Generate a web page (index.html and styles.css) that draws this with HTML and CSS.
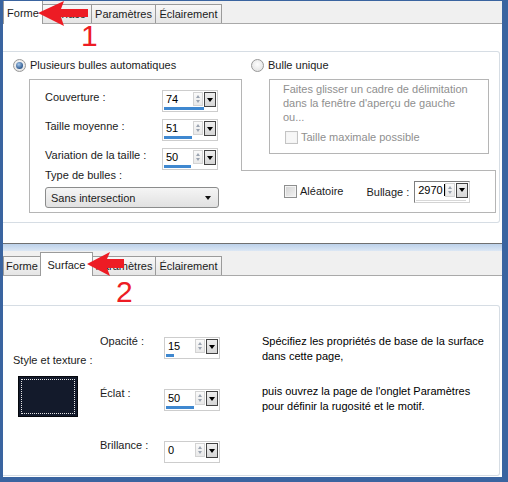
FILE: index.html
```html
<!DOCTYPE html>
<html lang="fr">
<head>
  <meta charset="UTF-8" />
  <meta name="viewport" content="width=device-width, initial-scale=1.0"/>
  <title>Bulles - Forme et Surface</title>
  <link rel="stylesheet" href="styles.css">
</head>
<body>

  <div class="frame">

    <!-- Onglet Forme -->
    <section class="panel panel-forme">
      <div class="tabs">
        <div class="tab tab-forme active">Forme</div>
        <div class="tab tab-surface">Surface</div>
        <div class="tab tab-params">Paramètres</div>
        <div class="tab tab-light">Éclairement</div>
      </div>

      <div class="page page-forme">
        <div class="group group-forme">
          <div class="radio-row">
            <label class="option option-auto"><span class="radio checked"></span>Plusieurs bulles automatiques</label>
            <label class="option"><span class="radio"></span>Bulle unique</label>
          </div>

          <div class="bubble-grid">
            <div class="auto-box">
              <div class="fields">
                <div class="field">
                  <span class="field-label">Couverture :</span>
                  <div class="spin">
                    <div class="spin-main"><span class="spin-value">74</span><span class="spin-arrows"></span><span class="spin-drop"></span></div>
                    <div class="spin-bar" style="width: 40px"></div>
                  </div>
                </div>
                <div class="field">
                  <span class="field-label">Taille moyenne :</span>
                  <div class="spin">
                    <div class="spin-main"><span class="spin-value">51</span><span class="spin-arrows"></span><span class="spin-drop"></span></div>
                    <div class="spin-bar" style="width: 28px"></div>
                  </div>
                </div>
                <div class="field">
                  <span class="field-label">Variation de la taille :</span>
                  <div class="spin">
                    <div class="spin-main"><span class="spin-value">50</span><span class="spin-arrows"></span><span class="spin-drop"></span></div>
                    <div class="spin-bar" style="width: 27px"></div>
                  </div>
                </div>
              </div>
              <div class="type-label">Type de bulles :</div>
              <div class="select">Sans intersection</div>
            </div>

            <div class="single-box">
              <p class="hint">Faites glisser un cadre de délimitation<br>dans la fenêtre d'aperçu de gauche<br>ou...</p>
              <label class="check-row check-disabled"><span class="checkbox"></span>Taille maximale possible</label>
            </div>

            <div class="random-box">
              <label class="check-row"><span class="checkbox"></span>Aléatoire</label>
              <span class="bullage-label">Bullage :</span>
              <div class="spin spin-focus">
                <div class="spin-main"><span class="spin-value"><span class="caret">2970</span></span><span class="spin-arrows"></span><span class="spin-drop"></span></div>
                <div class="spin-bar spin-bar-empty"></div>
              </div>
            </div>
          </div>
        </div>
      </div>

      <svg class="arrow arrow-1" width="52" height="27" viewBox="0 0 52 27">
        <polygon points="0,12 26,0 23,8 50,8 50,16 23,16 26,25" />
      </svg>
      <span class="step step-1">1</span>
    </section>

    <div class="divider"></div>

    <!-- Onglet Surface -->
    <section class="panel panel-surface">
      <div class="tabs">
        <div class="tab tab-forme">Forme</div>
        <div class="tab tab-surface active">Surface</div>
        <div class="tab tab-params">Paramètres</div>
        <div class="tab tab-light">Éclairement</div>
      </div>

      <div class="page page-surface">
        <div class="group group-surface">
          <div class="style-col">
            <div class="style-label">Style et texture :</div>
            <div class="swatch"></div>
          </div>

          <div class="surface-fields">
            <div class="surface-field">
              <span class="field-label">Opacité :</span>
              <div class="spin">
                <div class="spin-main"><span class="spin-value">15</span><span class="spin-arrows"></span><span class="spin-drop"></span></div>
                <div class="spin-bar" style="width: 8px"></div>
              </div>
            </div>
            <div class="surface-field">
              <span class="field-label">Éclat :</span>
              <div class="spin">
                <div class="spin-main"><span class="spin-value">50</span><span class="spin-arrows"></span><span class="spin-drop"></span></div>
                <div class="spin-bar" style="width: 28px"></div>
              </div>
            </div>
            <div class="surface-field">
              <span class="field-label">Brillance :</span>
              <div class="spin">
                <div class="spin-main"><span class="spin-value">0</span><span class="spin-arrows"></span><span class="spin-drop"></span></div>
                <div class="spin-bar" style="width: 0px"></div>
              </div>
            </div>
          </div>

          <div class="info">
            <p>Spécifiez les propriétés de base de la surface<br>dans cette page,</p>
            <p>puis ouvrez la page de l'onglet Paramètres<br>pour définir la rugosité et le motif.</p>
          </div>
        </div>
      </div>

      <svg class="arrow arrow-2" width="40" height="26" viewBox="0 0 40 26">
        <polygon points="0,12 23,0 20,7 37,7 37,16 20,16 23,24" />
      </svg>
      <span class="step step-2">2</span>
    </section>

  </div>

</body>
</html>
```

FILE: styles.css
```css
* { margin: 0; padding: 0; box-sizing: border-box; }

body {
  font-family: 'Liberation Sans', Arial, sans-serif;
  font-size: 11px;
  color: #1b1b1b;
  background: #fff;
}

.frame {
  width: 508px;
  height: 482px;
  border-style: solid;
  border-color: #3a64a0;
  border-width: 1px 6px 5px 3px;
  background: #fff;
  display: flex;
  flex-direction: column;
  overflow: hidden;
}

.panel { position: relative; }

/* Tabs */
.tabs {
  display: flex;
  align-items: flex-end;
  height: 23px;
  background: #f0f0f0;
  border-bottom: 1px solid #a9a9a9;
}

.panel-surface .tabs { height: 25px; }

.tab {
  height: 19px;
  border: 1px solid #9b9b9b;
  border-bottom: none;
  background: linear-gradient(#f8f8f8, #e5e5e5);
  display: flex;
  align-items: center;
  justify-content: center;
  white-space: nowrap;
}

.tab + .tab { margin-left: -1px; }

.tab.active {
  height: 24px;
  margin-bottom: -1px;
  background: #fff;
  position: relative;
}

.tab-forme { width: 40px; }
.tab-surface { width: 50px; }
.tab-params { width: 65px; }
.tab-light { width: 67px; }

.panel-surface .tab-forme { width: 38px; }
.panel-surface .tab-surface { width: 53px; }
.panel-surface .tab-params { width: 64px; }

/* Pages */
.page { background: #fff; }
.page-forme { height: 219px; padding-top: 27px; }
.page-surface { height: 201px; padding-top: 29px; }

.group {
  border: 1px solid #d6dde4;
  border-left: none;
  border-radius: 0 3px 3px 0;
  margin-right: 2px;
}

.group-forme { height: 172px; padding: 7px 0 0 10px; }

.group-surface {
  height: 171px;
  display: flex;
  padding-left: 10px;
}

/* Radio buttons and checkboxes */
.radio-row { display: flex; height: 13px; }

.option {
  display: flex;
  align-items: center;
  gap: 4px;
  line-height: 13px;
}

.option-auto { width: 238px; }

.radio {
  width: 13px;
  height: 13px;
  border-radius: 50%;
  border: 1px solid #989898;
  background: radial-gradient(circle at 50% 40%, #fdfdfd, #dedede);
  display: flex;
  align-items: center;
  justify-content: center;
}

.radio.checked::after {
  content: '';
  width: 7px;
  height: 7px;
  border-radius: 50%;
  background: radial-gradient(circle at 40% 35%, #a6c8ec, #2f5a8f 70%);
}

.check-row {
  display: flex;
  align-items: center;
  gap: 3px;
  line-height: 13px;
}

.checkbox {
  width: 13px;
  height: 13px;
  border: 1px solid #8e8f8f;
  background: linear-gradient(135deg, #d2d2d2, #f4f4f4);
  box-shadow: inset 0 0 0 1px #f4f4f4;
}

.check-disabled .checkbox {
  border-color: #c4c4c4;
  background: #f7f7f7;
}

/* Forme layout */
.bubble-grid {
  display: grid;
  grid-template-columns: 213px 254px;
  grid-template-rows: 91px 43px;
  margin: 7px 0 0 16px;
}

.auto-box {
  grid-row: 1 / 3;
  border: 1px solid #b5b5b5;
  padding: 10px 0 0 15px;
}

.fields {
  display: flex;
  flex-direction: column;
  gap: 7px;
}

.field {
  display: grid;
  grid-template-columns: 117px 56px;
}

.field-label { line-height: 14px; }

.type-label { line-height: 13px; margin-top: -1px; }

.select {
  position: relative;
  margin-top: 5px;
  width: 174px;
  height: 21px;
  border: 1px solid #8b8c8c;
  border-radius: 3px;
  background: linear-gradient(#f5f5f5, #e1e1e1);
  padding-left: 5px;
  display: flex;
  align-items: center;
}

.select::after {
  content: '';
  position: absolute;
  right: 7px;
  top: 8px;
  border-left: 3px solid transparent;
  border-right: 3px solid transparent;
  border-top: 4px solid #111;
}

.single-box {
  margin-left: 27px;
  width: 220px;
  height: 75px;
  border: 1px solid #b5b5b5;
  padding: 2px 0 0 13px;
  color: #8f8f8f;
}

.hint { line-height: 14px; }

.single-box .check-row { margin: 7px 0 0 2px; }

.random-box {
  grid-column: 2;
  grid-row: 2;
  margin-left: -1px;
  border: 1px solid #b5b5b5;
  border-left: none;
  background: #fff;
  display: flex;
  align-items: center;
  padding-left: 43px;
}

.bullage-label { margin: 0 5px 0 23px; }

/* Spin box with slider bar */
.spin {
  width: 56px;
  height: 22px;
  border: 1px solid #cdcdcd;
  background: #fff;
  display: flex;
  flex-direction: column;
  padding-left: 1px;
}

.spin-main {
  display: flex;
  height: 17px;
  padding-top: 1px;
}

.spin-value {
  flex: 1;
  padding-left: 2px;
  line-height: 14px;
  color: #000;
}

.spin-arrows {
  position: relative;
  width: 10px;
  height: 14px;
  border: 1px solid #d3d3d3;
  background: linear-gradient(#fafafa, #e9e9e9);
  margin-right: 1px;
}

.spin-arrows::before,
.spin-arrows::after {
  content: '';
  position: absolute;
  left: 2px;
  border-left: 2.5px solid transparent;
  border-right: 2.5px solid transparent;
}

.spin-arrows::before { top: 2px; border-bottom: 3px solid #9aa3b0; }
.spin-arrows::after { bottom: 2px; border-top: 3px solid #9aa3b0; }

.spin-drop {
  width: 12px;
  height: 15px;
  margin-right: 1px;
  border: 1px solid #434343;
  background: linear-gradient(#eeeeee, #d6d6d6);
  display: flex;
  align-items: center;
  justify-content: center;
}

.spin-drop::after {
  content: '';
  border-left: 3px solid transparent;
  border-right: 3px solid transparent;
  border-top: 4px solid #000;
}

.spin-bar {
  height: 3px;
  margin-top: auto;
  margin-bottom: 1px;
  background: #3f88d0;
}

.spin-focus { border-color: #7e7e7e #d3d3d3 #d3d3d3 #7e7e7e; }
.spin-bar-empty { width: 50px; height: 1px; background: #d8d8d8; }
.caret { border-right: 1px solid #000; padding-right: 1px; }

/* Divider between the two captures */
.divider {
  height: 8px;
  border-top: 1px solid #707070;
  background: linear-gradient(#bcd1ea, #dce7f4);
}

/* Surface layout */
.style-col { width: 87px; padding-top: 48px; }

.style-label { line-height: 13px; }

.swatch {
  margin: 9px 0 0 5px;
  width: 60px;
  height: 41px;
  background: #131a2b;
  border: 1px solid #05070c;
  outline: 1px dotted #e6e6e6;
  outline-offset: -4px;
}

.surface-fields {
  width: 162px;
  padding-top: 31px;
  display: flex;
  flex-direction: column;
  gap: 30px;
}

.surface-field {
  display: grid;
  grid-template-columns: 64px 56px;
}

.surface-field .field-label { line-height: 13px; margin-top: -2px; }

.info {
  padding-top: 28px;
  line-height: 15px;
  color: #000;
}

.info p + p { margin-top: 20px; }

/* Red annotations */
.arrow {
  position: absolute;
  fill: #ed1c24;
  z-index: 2;
}

.arrow-1 { left: 35px; top: 0; }
.arrow-2 { left: 84px; top: 1px; }

.step {
  position: absolute;
  color: #ed1c24;
  font-size: 30px;
  line-height: 30px;
  z-index: 2;
}

.step-1 { left: 78px; top: 20px; }
.step-2 { left: 113px; top: 26px; }
```
